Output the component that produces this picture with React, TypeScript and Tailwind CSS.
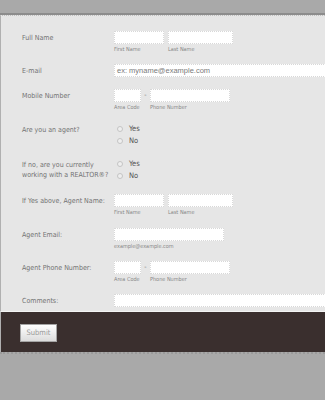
import React from "react";

const label = "text-[7px] leading-[10px] text-[#737373]";
const sub = "text-[5.5px] leading-[6px] text-[#888] mt-[2px]";
const input = "h-[13px] bg-white border border-[#d8d8d8] border-dotted";

function Radio({ text }: { text: string }) {
  return (
    <div className="flex items-center h-[12px]">
      <span className="w-[6px] h-[6px] rounded-full border border-[#c4c4c4] bg-[#efefef] ml-[3px] mr-[6px]" />
      <span className="text-[7.5px] text-[#555]">{text}</span>
    </div>
  );
}

function Row({ h, title, children }: { h: string; title: React.ReactNode; children: React.ReactNode }) {
  return (
    <div className={`flex ${h}`}>
      <div className={`w-[92px] shrink-0 pt-[2px] whitespace-nowrap ${label}`}>{title}</div>
      <div className="flex-1 min-w-0">{children}</div>
    </div>
  );
}

function Phone() {
  return (
    <div className="flex">
      <div>
        <div className={`${input} w-[27px]`} />
        <div className={sub}>Area Code</div>
      </div>
      <span className="w-[9px] text-center text-[7px] leading-[13px] text-[#777]">-</span>
      <div>
        <div className={`${input} w-[80px]`} />
        <div className={sub}>Phone Number</div>
      </div>
    </div>
  );
}

function Names() {
  return (
    <div className="flex gap-[4px]">
      <div>
        <div className={`${input} w-[50px]`} />
        <div className={sub}>First Name</div>
      </div>
      <div>
        <div className={`${input} w-[65px]`} />
        <div className={sub}>Last Name</div>
      </div>
    </div>
  );
}

export default function App() {
  return (
    <div
      className="w-[325px] h-[400px] bg-[#a9a9a9] pt-[13px] overflow-hidden"
      style={{ fontFamily: '"DejaVu Sans Condensed", "DejaVu Sans", sans-serif' }}
    >
      <div className="h-[2px] bg-[#8c8c8c]" />
      <div className="h-[1px] border-t border-dotted border-[#c0c0c0] bg-[#e6e6e6]" />
      <div className="border-l border-[#b0b0b0] bg-[#e6e6e6] pl-[21px] pt-[15px] h-[295px]">
        <Row h="h-[33px]" title="Full Name">
          <Names />
        </Row>
        <Row h="h-[25px]" title="E-mail">
          <div
            className={`${input} w-[230px] text-[7.5px] leading-[11px] pl-[2px] text-[#7a7a7a]`}
            style={{ fontFamily: '"Liberation Sans", sans-serif' }}
          >
            ex: myname@example.com
          </div>
        </Row>
        <Row h="h-[34px]" title="Mobile Number">
          <Phone />
        </Row>
        <Row h="h-[35px]" title="Are you an agent?">
          <Radio text="Yes" />
          <Radio text="No" />
        </Row>
        <Row h="h-[36px]" title={<>If no, are you currently<br />working with a REALTOR®?</>}>
          <Radio text="Yes" />
          <Radio text="No" />
        </Row>
        <Row h="h-[34px]" title="If Yes above, Agent Name:">
          <Names />
        </Row>
        <Row h="h-[33px]" title="Agent Email:">
          <div className={`${input} w-[110px]`} />
          <div className={sub}>example@example.com</div>
        </Row>
        <Row h="h-[33px]" title="Agent Phone Number:">
          <Phone />
        </Row>
        <Row h="h-[17px]" title="Comments:">
          <div className={`${input} w-[230px]`} />
        </Row>
      </div>
      <div className="border-t border-[#f4f4f4] border-l border-l-[#b0b0b0] bg-[#3a2f2e] h-[41px] pl-[19px] pt-[12px]">
        <button className="block w-[37px] h-[18px] bg-gradient-to-b from-white to-[#dcdcdc] border border-[#a5a5a5] text-[7.5px] text-[#999]">
          Submit
        </button>
      </div>
      <div className="h-[2px] border-t-2 border-dotted border-[#9a9a9a]" />
    </div>
  );
}
